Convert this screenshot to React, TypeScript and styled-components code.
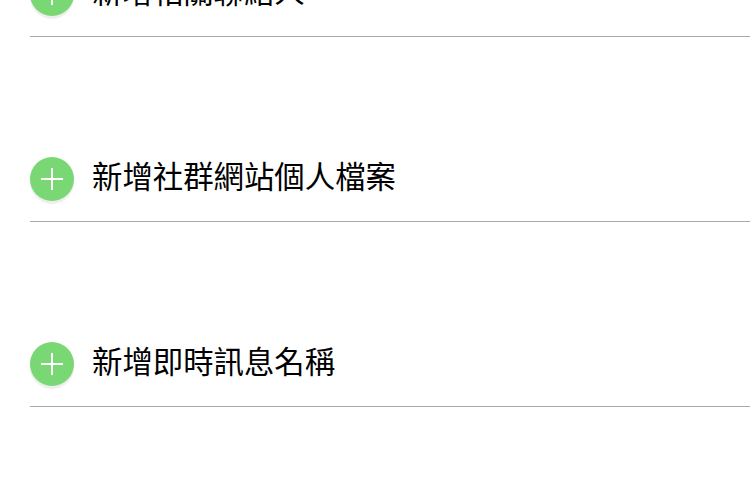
import React from "react";
import styled, { createGlobalStyle } from "styled-components";

const GlobalStyle = createGlobalStyle`
  html, body {
    margin: 0;
    padding: 0;
    height: 480px;
    overflow: hidden;
    background: #ffffff;
  }
`;

const rows = ["新增相關聯絡人", "新增社群網站個人檔案", "新增即時訊息名稱"];

const App = () => {
  return (
    <Page>
      <GlobalStyle />
      {rows.map((label) => (
        <Row key={label}>
          <AddButton>
            <svg width="24" height="24" viewBox="0 0 24 24">
              <path d="M1 12H23M12 1V23" stroke="#fff" strokeWidth="2" fill="none" />
            </svg>
          </AddButton>
          <Label>{label}</Label>
        </Row>
      ))}
    </Page>
  );
};

export default App;

const Page = styled.div`
  width: 750px;
  margin-top: -49px;
  padding-left: 30px;
  box-sizing: border-box;
  display: flex;
  flex-direction: column;
  gap: 99px;
`;

const Row = styled.div`
  height: 86px;
  box-sizing: border-box;
  display: flex;
  align-items: center;
  gap: 18px;
  border-bottom: 1px solid #aaaaaa;
`;

const AddButton = styled.div`
  width: 44px;
  height: 44px;
  flex: none;
  border-radius: 50%;
  background: #7ad874;
  box-shadow: 0 3px 1px #eeeeee;
  display: flex;
  align-items: center;
  justify-content: center;
`;

const Label = styled.div`
  font-family: "Noto Sans CJK TC", "Noto Sans", sans-serif;
  font-size: 30.4px;
  font-weight: 400;
  line-height: 44px;
  padding-bottom: 7px;
  color: #000000;
  white-space: nowrap;
`;
